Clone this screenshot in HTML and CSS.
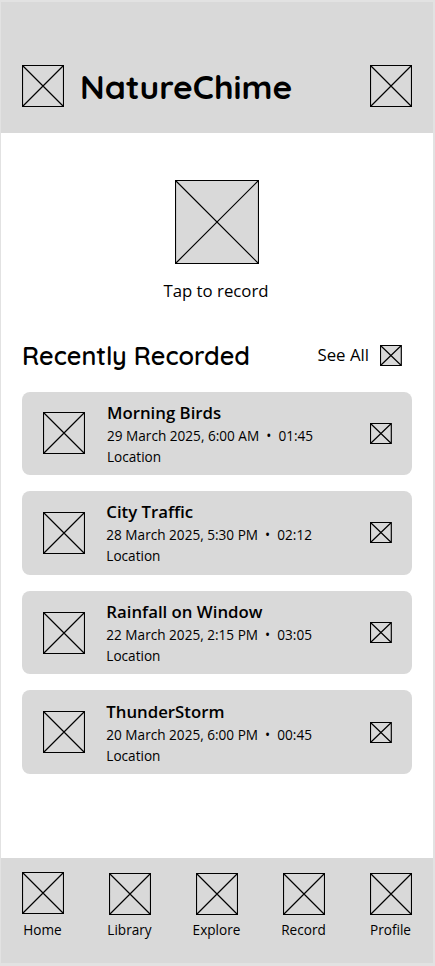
FILE: index.html
```html
<!DOCTYPE html>
<html lang="en">
<head>
<meta charset="utf-8">
<title>NatureChime</title>
<link rel="stylesheet" href="styles.css">
</head>
<body>
<svg class="defs" width="0" height="0" aria-hidden="true">
  <symbol id="box42" viewBox="0 0 42 42"><path d="M.5 .5H41.5V41.5H.5ZL41.5 41.5M41.5 .5L.5 41.5"/></symbol>
  <symbol id="box84" viewBox="0 0 84 84"><path d="M.5 .5H83.5V83.5H.5ZL83.5 83.5M83.5 .5L.5 83.5"/></symbol>
  <symbol id="box21" viewBox="0 0 22 21"><path d="M.5 .5H21.3V20.5H.5ZL21.3 20.5M21.3 .5L.5 20.5"/></symbol>
</svg>
<div class="screen">
  <header class="header">
    <svg class="icon"><use href="#box42"/></svg>
    <h1 class="brand">NatureChime</h1>
    <svg class="icon"><use href="#box42"/></svg>
  </header>
  <main class="main">
    <section class="record">
      <svg class="icon icon-large"><use href="#box84"/></svg>
      <p class="record-label">Tap to record</p>
    </section>
    <div class="section-head">
      <h2 class="section-title">Recently Recorded</h2>
      <a class="see-all"><span>See All</span><svg class="icon icon-small filled"><use href="#box21"/></svg></a>
    </div>
    <ul class="list">
      <li class="card card-first">
        <svg class="icon"><use href="#box42"/></svg>
        <div class="info"><h3 class="name">Morning Birds</h3><p class="meta">29 March 2025, 6:00 AM&nbsp; •&nbsp; 01:45</p><p class="meta">Location</p></div>
        <svg class="icon icon-small"><use href="#box21"/></svg>
      </li>
      <li class="card">
        <svg class="icon"><use href="#box42"/></svg>
        <div class="info"><h3 class="name">City Traffic</h3><p class="meta">28 March 2025, 5:30 PM&nbsp; •&nbsp; 02:12</p><p class="meta">Location</p></div>
        <svg class="icon icon-small"><use href="#box21"/></svg>
      </li>
      <li class="card">
        <svg class="icon"><use href="#box42"/></svg>
        <div class="info"><h3 class="name">Rainfall on Window</h3><p class="meta">22 March 2025, 2:15 PM&nbsp; •&nbsp; 03:05</p><p class="meta">Location</p></div>
        <svg class="icon icon-small"><use href="#box21"/></svg>
      </li>
      <li class="card">
        <svg class="icon"><use href="#box42"/></svg>
        <div class="info"><h3 class="name">ThunderStorm</h3><p class="meta">20 March 2025, 6:00 PM&nbsp; •&nbsp; 00:45</p><p class="meta">Location</p></div>
        <svg class="icon icon-small"><use href="#box21"/></svg>
      </li>
    </ul>
  </main>
  <nav class="nav">
    <a class="tab tab-active"><svg class="icon"><use href="#box42"/></svg><span>Home</span></a>
    <a class="tab"><svg class="icon"><use href="#box42"/></svg><span>Library</span></a>
    <a class="tab"><svg class="icon"><use href="#box42"/></svg><span>Explore</span></a>
    <a class="tab"><svg class="icon"><use href="#box42"/></svg><span>Record</span></a>
    <a class="tab"><svg class="icon"><use href="#box42"/></svg><span>Profile</span></a>
  </nav>
</div>
</body>
</html>
```
FILE: styles.css
```css
* { box-sizing: border-box; margin: 0; padding: 0; }
body { font-family: "Open Sans", "Noto Sans", sans-serif; color: #000; background: #e2e2e2; }
.defs { display: block; height: 0; }
.screen {
  display: flex;
  flex-direction: column;
  width: 435px;
  height: 966px;
  border: solid #e2e2e2;
  border-width: 2px 2px 3px 1px;
  background: #fff;
}
.icon { flex: none; display: block; width: 42px; height: 42px; fill: none; stroke: #000; stroke-width: 1.15; }
.icon-large { width: 84px; height: 84px; background: #d9d9d9; }
.icon-small { width: 22px; height: 21px; }
.filled { background: #d9d9d9; }

.header { display: flex; height: 131px; padding: 63px 21px 0 21px; background: #d9d9d9; }
.brand {
  flex: 1;
  padding-left: 16px;
  font: 700 33.6px/42px Quicksand, Lato, sans-serif;
  white-space: nowrap;
}

.main { flex: 1; padding: 47px 21px 0; }
.record { display: flex; flex-direction: column; align-items: center; }
.record-label { margin-top: 15px; padding-right: 2px; font-size: 16.8px; line-height: 24px; }

.section-head { display: flex; align-items: center; justify-content: space-between; height: 32px; margin-top: 36px; padding-right: 10px; }
.section-title { padding-top: 1px; font: 600 25.2px/32px Quicksand, Lato, sans-serif; white-space: nowrap; }
.see-all { display: flex; align-items: center; gap: 11px; font-size: 16.8px; line-height: 24px; }

.list { display: flex; flex-direction: column; gap: 15.8px; margin-top: 20.5px; list-style: none; }
.card { display: flex; align-items: center; height: 83.8px; padding: 0 20.5px 0 21px; border-radius: 8px; background: #d9d9d9; }
.info { flex: 1; padding: 1px 0 0 21.3px; white-space: nowrap; }
.card-first .info { padding-left: 22px; }
.name { font-size: 16.8px; font-weight: 600; line-height: 24px; }
.meta { font-size: 13.6px; line-height: 21px; }

.nav { display: flex; justify-content: space-between; height: 105.5px; padding: 15px 21px 0; background: #d9d9d9; }
.tab { display: flex; flex-direction: column; align-items: center; width: 42px; font-size: 13.6px; line-height: 20px; white-space: nowrap; }
.tab span { margin-top: 5px; padding-right: 1px; }
.tab-active .icon { margin-top: -1px; margin-bottom: 1px; }
```
